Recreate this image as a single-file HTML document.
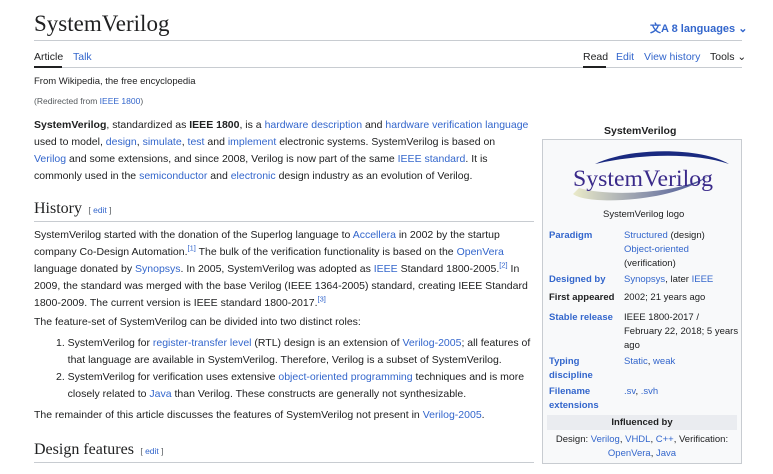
<!DOCTYPE html>
<html><head><meta charset="utf-8"><style>
*{margin:0;padding:0;box-sizing:border-box}
body{width:773px;height:474px;overflow:hidden;background:#fff;font-family:"Liberation Sans","NanumGothic",sans-serif;color:#202122;font-size:10.5px;position:relative}
a{color:#3366cc;text-decoration:none}
.abs{position:absolute;white-space:nowrap}
.ser{font-family:"Liberation Serif",serif}
.p{line-height:17px}
sup{font-size:7.5px;line-height:0;color:#3366cc}
.ib{position:absolute;left:542px;top:139px;width:200px;height:325px;background:#f8f9fa;border:1px solid #c8ccd1}
.lb{color:#3366cc;font-weight:bold;position:absolute;left:6px;font-size:9.5px;line-height:14px}
.vl{position:absolute;left:81px;font-size:9.5px;line-height:14px;white-space:nowrap}
</style></head><body>
<div class="abs ser" style="left:34px;top:11px;font-size:23px">SystemVerilog</div>
<div class="abs" style="left:650px;top:20px;font-size:11px;color:#3366cc;font-weight:bold">文A 8 languages ⌄</div>
<div style="position:absolute;left:34px;top:40px;width:708px;height:1px;background:#c8ccd1"></div>
<div class="abs" style="left:34px;top:51px">Article</div>
<div class="abs" style="left:73px;top:51px;color:#3366cc">Talk</div>
<div class="abs" style="left:583px;top:51px">Read</div>
<div class="abs" style="left:616px;top:51px;color:#3366cc">Edit</div>
<div class="abs" style="left:644px;top:51px;color:#3366cc">View history</div>
<div class="abs" style="left:710px;top:51px">Tools ⌄</div>
<div style="position:absolute;left:34px;top:67px;width:708px;height:1px;background:#c8ccd1"></div>
<div style="position:absolute;left:34px;top:66px;width:28px;height:2px;background:#202122"></div>
<div style="position:absolute;left:583px;top:66px;width:23px;height:2px;background:#202122"></div>
<div class="abs" style="left:34px;top:76px;font-size:9.5px">From Wikipedia, the free encyclopedia</div>
<div class="abs" style="left:34px;top:96px;font-size:8.5px;color:#54595d">(Redirected from <a>IEEE 1800</a>)</div>

<div class="abs p" style="left:34px;top:117px"><b>SystemVerilog</b>, standardized as <b>IEEE 1800</b>, is a <a>hardware description</a> and <a>hardware verification language</a><br>used to model, <a>design</a>, <a>simulate</a>, <a>test</a> and <a>implement</a> electronic systems. SystemVerilog is based on<br><a>Verilog</a> and some extensions, and since 2008, Verilog is now part of the same <a>IEEE standard</a>. It is<br>commonly used in the <a>semiconductor</a> and <a>electronic</a> design industry as an evolution of Verilog.</div>

<div class="abs ser" style="left:34px;top:200px;font-size:16px">History <span style="font-family:'Liberation Sans';font-size:8.5px;color:#54595d">&nbsp;[ <a>edit</a> ]</span></div>
<div style="position:absolute;left:34px;top:221px;width:500px;height:1px;background:#c8ccd1"></div>
<div class="abs p" style="left:34px;top:227px">SystemVerilog started with the donation of the Superlog language to <a>Accellera</a> in 2002 by the startup<br>company Co-Design Automation.<sup>[1]</sup> The bulk of the verification functionality is based on the <a>OpenVera</a><br>language donated by <a>Synopsys</a>. In 2005, SystemVerilog was adopted as <a>IEEE</a> Standard 1800-2005.<sup>[2]</sup> In<br>2009, the standard was merged with the base Verilog (IEEE 1364-2005) standard, creating IEEE Standard<br>1800-2009. The current version is IEEE standard 1800-2017.<sup>[3]</sup></div>
<div class="abs p" style="left:34px;top:314px">The feature-set of SystemVerilog can be divided into two distinct roles:</div>
<div class="abs p" style="left:56px;top:335px">1. SystemVerilog for <a>register-transfer level</a> (RTL) design is an extension of <a>Verilog-2005</a>; all features of<br>&nbsp;&nbsp;&nbsp;&nbsp;that language are available in SystemVerilog. Therefore, Verilog is a subset of SystemVerilog.<br>2. SystemVerilog for verification uses extensive <a>object-oriented programming</a> techniques and is more<br>&nbsp;&nbsp;&nbsp;&nbsp;closely related to <a>Java</a> than Verilog. These constructs are generally not synthesizable.</div>
<div class="abs p" style="left:34px;top:407px">The remainder of this article discusses the features of SystemVerilog not present in <a>Verilog-2005</a>.</div>
<div class="abs ser" style="left:34px;top:441px;font-size:16px">Design features <span style="font-family:'Liberation Sans';font-size:8.5px;color:#54595d">&nbsp;[ <a>edit</a> ]</span></div>
<div style="position:absolute;left:34px;top:462px;width:500px;height:1px;background:#c8ccd1"></div>

<div class="abs" style="left:604px;top:125px;font-weight:bold;font-size:10.5px">SystemVerilog</div>
<div class="ib">
<svg style="position:absolute;left:10px;top:4px" width="180" height="62" viewBox="0 0 180 62">
<defs><linearGradient id="g" x1="0" x2="1"><stop offset="0" stop-color="#e8e8c0"/><stop offset="1" stop-color="#1a2a80"/></linearGradient></defs>
<path d="M20 50 C 35 62, 125 58, 158 30 C 135 48, 60 54, 26 44 Z" fill="url(#g)" opacity=".85"/>
<path d="M42 20 C 80 2, 150 4, 176 20 C 140 8, 85 10, 42 20 Z" fill="#1a2a80"/>
<text x="20" y="42" font-family="Liberation Serif" font-size="23" fill="#3a2a8a" textLength="140" lengthAdjust="spacingAndGlyphs">SystemVerilog</text>
</svg>
<div class="abs" style="left:60px;top:69px;font-size:9.5px">SystemVerilog logo</div>
<div class="lb" style="top:89px">Paradigm</div>
<div class="vl" style="top:89px"><a>Structured</a> (design)<br><a>Object-oriented</a><br>(verification)</div>
<div class="lb" style="top:133px">Designed by</div>
<div class="vl" style="top:133px"><a>Synopsys</a>, later <a>IEEE</a></div>
<div class="lb" style="top:151px;color:#202122">First appeared</div>
<div class="vl" style="top:151px">2002; 21 years ago</div>
<div class="lb" style="top:171px">Stable release</div>
<div class="vl" style="top:171px">IEEE 1800-2017 /<br>February 22, 2018; 5 years<br>ago</div>
<div class="lb" style="top:215px">Typing<br>discipline</div>
<div class="vl" style="top:215px"><a>Static</a>, <a>weak</a></div>
<div class="lb" style="top:245px">Filename<br>extensions</div>
<div class="vl" style="top:245px"><a>.sv</a>, <a>.svh</a></div>
<div style="position:absolute;left:4px;top:275px;width:190px;height:15px;background:#eaecf0;text-align:center;font-weight:bold;font-size:9.5px;line-height:15px">Influenced by</div>
<div style="position:absolute;left:0;top:293px;width:198px;text-align:center;font-size:9.5px;line-height:14px">Design: <a>Verilog</a>, <a>VHDL</a>, <a>C++</a>, Verification:<br><a>OpenVera</a>, <a>Java</a></div>
</div>
</body></html>
